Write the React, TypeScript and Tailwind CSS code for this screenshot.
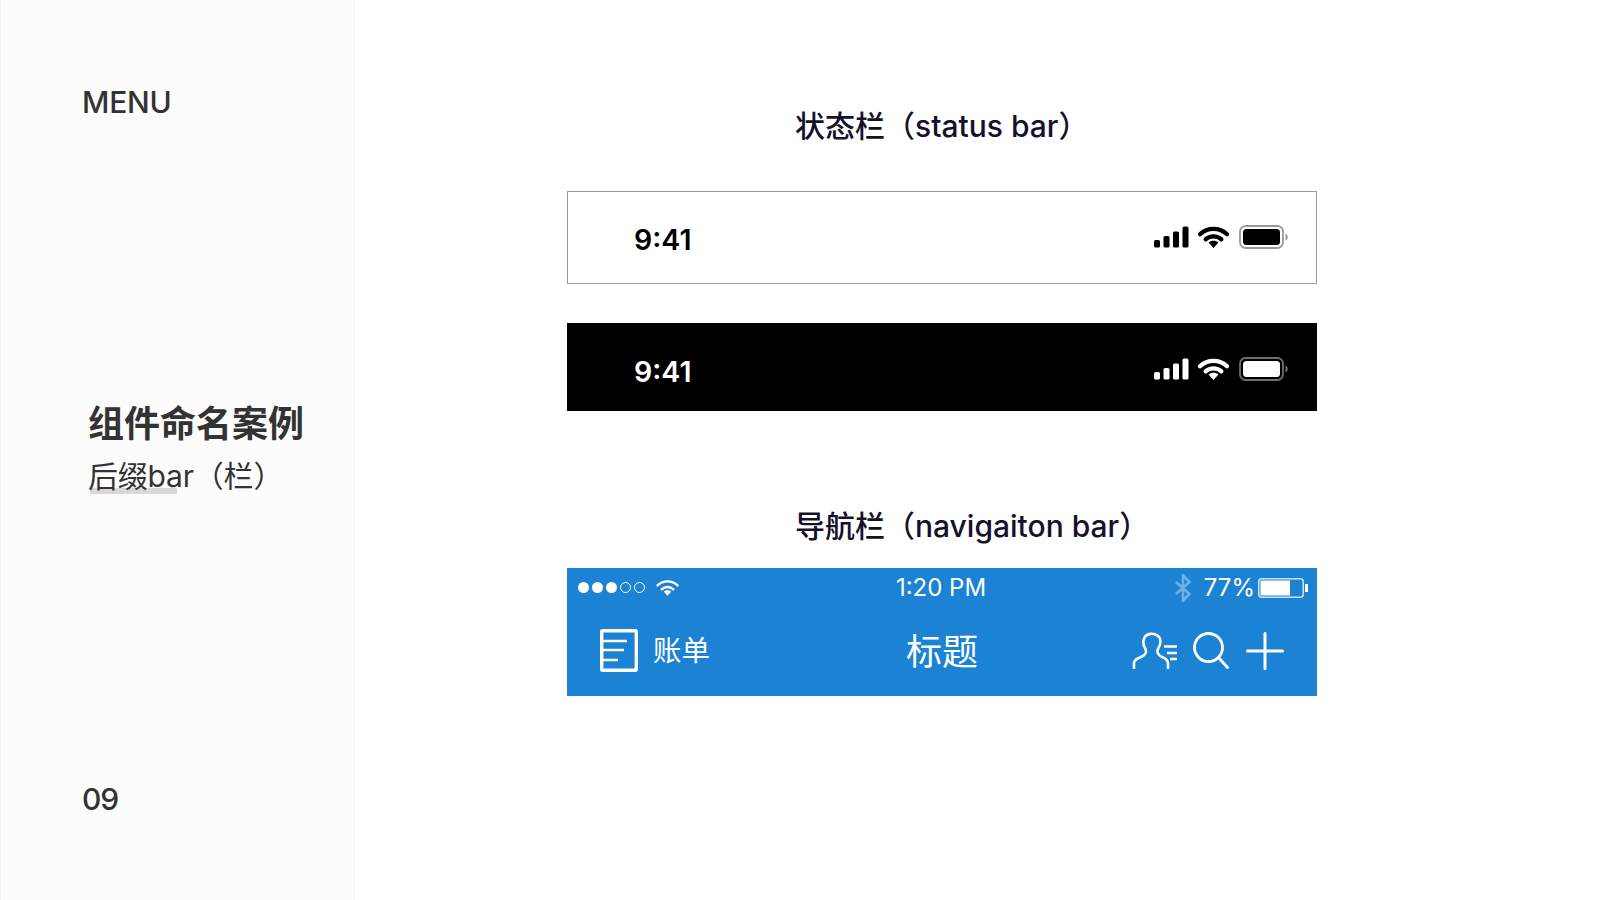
import React from "react";

const SANS = "font-['Inter','Noto_Sans_CJK_SC',sans-serif]";

function Signal({ c }: { c: string }) {
  return (
    <svg width="35" height="22" viewBox="0 0 35 22" className="block">
      <rect x="0" y="14" width="6" height="7.5" rx="1.6" fill={c} />
      <rect x="9.5" y="10" width="6" height="11.5" rx="1.6" fill={c} />
      <rect x="19" y="5.5" width="6" height="16" rx="1.6" fill={c} />
      <rect x="28.5" y="0.5" width="6" height="21" rx="1.6" fill={c} />
    </svg>
  );
}

function Wifi({ c, w = 31, h = 22, sw = 4.2 }: { c: string; w?: number; h?: number; sw?: number }) {
  return (
    <svg width={w} height={h} viewBox="0 0 31 22" className="block">
      <path d="M2 8.2 C9.5 1 21.5 1 29 8.2" fill="none" stroke={c} strokeWidth={sw} strokeLinecap="round" />
      <path d="M7.6 13.4 C12 9.4 19 9.4 23.4 13.4" fill="none" stroke={c} strokeWidth={sw} strokeLinecap="round" />
      <path d="M10.6 16.6 C13 14.2 18 14.2 20.4 16.6 L15.5 22 Z" fill={c} />
    </svg>
  );
}

function Battery({ fill, border }: { fill: string; border: string }) {
  return (
    <svg width="49" height="24" viewBox="0 0 49 24" className="block">
      <rect x="1" y="1" width="43" height="22" rx="5.5" fill="none" stroke={border} strokeWidth="1.8" />
      <rect x="4" y="4" width="37" height="16" rx="3.5" fill={fill} />
      <path d="M46.5 8.5 C48 9 48.8 10.5 48.8 12 C48.8 13.5 48 15 46.5 15.5 Z" fill={border} />
    </svg>
  );
}

function StatusRight({ c, border }: { c: string; border: string }) {
  return (
    <div className="flex items-center">
      <Signal c={c} />
      <div className="ml-[9px]">
        <Wifi c={c} />
      </div>
      <div className="ml-[10px]">
        <Battery fill={c} border={border} />
      </div>
    </div>
  );
}

function Heading({ cn, latin }: { cn: string; latin: string }) {
  return (
    <h2 className="pl-[228px] text-[30px] leading-[40px] font-medium text-[#15102b] whitespace-nowrap">
      {cn}（<span className="tracking-[0px]">{latin}</span>）
    </h2>
  );
}

export default function App() {
  return (
    <div className={`flex h-[900px] w-[1600px] overflow-hidden bg-white ${SANS}`}>
      <aside className="relative flex h-full w-[355px] shrink-0 flex-col border-x border-[#f3f3f3] bg-[#fcfcfc] pl-[81px] text-[#333333]">
        <div className="mt-[84px] text-[30px] leading-[36px] font-medium tracking-[-0.2px]">MENU</div>
        <div className="mt-[282px] pl-[6px] text-[36px] leading-[44px] font-semibold whitespace-nowrap">组件命名案例</div>
        <div className="relative mt-[8px] pl-[6px] text-[30px] leading-[44px] tracking-[-0.2px] whitespace-nowrap">
          <span className="absolute left-[8px] top-[34px] h-[6px] w-[87px] bg-[#d8d8d8]" />
          <span className="relative">后缀bar（栏）</span>
        </div>
        <div className="mt-[283px] text-[30px] leading-[36px] font-medium tracking-[-1px]">09</div>
      </aside>

      <main className="flex-1">
        <div className="pl-[212px] pt-[106px]">
          <div className="w-[750px]">
            <Heading cn="状态栏" latin="status bar" />
            <div className="mt-[45px] flex h-[93px] items-center justify-between border border-[#9b9b9b] bg-white pl-[66px] pr-[28px]">
              <span className="mt-[6px] text-[28.5px] font-semibold text-black">9:41</span>
              <div className="mb-[2px]">
                <StatusRight c="#000000" border="#9a9a9a" />
              </div>
            </div>
            <div className="mt-[39px] flex h-[88px] items-center justify-between bg-black pl-[67px] pr-[29px]">
              <span className="mt-[10px] text-[28.5px] font-semibold text-white">9:41</span>
              <div className="mt-[3px]">
                <StatusRight c="#ffffff" border="#6e6e6e" />
              </div>
            </div>
            <div className="mt-[95px]">
              <Heading cn="导航栏" latin="navigaiton bar" />
            </div>
            <div className="mt-[22px] h-[128px] bg-[#1c82d4] text-white">
              <div className="grid h-[40px] grid-cols-[1fr_auto_1fr] items-center pl-[11px] pr-[9px]">
                <div className="mb-[2px] flex items-center">
                  <div className="flex gap-[3px]">
                    <span className="h-[11px] w-[11px] rounded-full bg-white" />
                    <span className="h-[11px] w-[11px] rounded-full bg-white" />
                    <span className="h-[11px] w-[11px] rounded-full bg-white" />
                    <span className="h-[11px] w-[11px] rounded-full border border-white" />
                    <span className="h-[11px] w-[11px] rounded-full border border-white" />
                  </div>
                  <div className="ml-[11px]">
                    <Wifi c="#ffffff" w={23} h={19} sw={3.2} />
                  </div>
                </div>
                <span className="pr-[4px] text-[24px] leading-[30px] font-normal">1:20 PM</span>
                <div className="flex items-center justify-end">
                  <svg width="18" height="28" viewBox="0 0 18 28" className="block">
                    <path d="M2 8 L15.5 20 L9 26.5 V1.5 L15.5 8 L2 20" fill="none" stroke="#6fb0e5" strokeWidth="2.6" />
                  </svg>
                  <span className="ml-[12px] text-[24px] leading-[30px] font-normal">77%</span>
                  <svg width="50" height="20" viewBox="0 0 50 20" className="ml-[3px] block">
                    <rect x="0.75" y="0.75" width="44.5" height="18.5" rx="3" fill="none" stroke="#cfe4f6" strokeWidth="1.5" />
                    <rect x="2.5" y="2.5" width="29.5" height="15" fill="#ffffff" />
                    <rect x="47" y="6" width="3" height="8" fill="#ffffff" />
                  </svg>
                </div>
              </div>
              <div className="grid h-[88px] grid-cols-[1fr_auto_1fr] items-center pb-[4px] pl-[33px] pr-[33px]">
                <div className="flex items-center">
                  <svg width="38" height="43" viewBox="0 0 38 43" className="block">
                    <rect x="1.7" y="1.7" width="34.6" height="39.6" rx="1" fill="none" stroke="#ffffff" strokeWidth="3.4" />
                    <path d="M3 12 H27 M3 21 H24 M3 31 H18" stroke="#ffffff" strokeWidth="2.6" fill="none" />
                  </svg>
                  <span className="ml-[15px] mt-[2px] text-[28.5px] leading-[36px] font-normal">账单</span>
                </div>
                <span className="mt-[4px] text-[36px] leading-[44px] font-normal">标题</span>
                <div className="flex items-center justify-end">
                  <svg width="45" height="37" viewBox="0 0 45 37" className="block">
                    <path d="M2 36 V31 C2 27 6 26.5 10 24.5 C13 23 15 21.5 13.5 17 C11 13 10.5 9.5 12.5 5.5 C14.5 1.5 21.5 0.5 25.5 3.5 C29.5 6.5 29 12 26 17 C24.5 20 26 23 30 25 C34 26.5 36 28 36 31.5 V36" fill="none" stroke="#ffffff" strokeWidth="2.6" strokeLinecap="round" />
                    <path d="M32 14.5 H45 M35 21 H45 M38 27 H45" fill="none" stroke="#ffffff" strokeWidth="2.4" />
                  </svg>
                  <svg width="36" height="37" viewBox="0 0 36 37" className="ml-[16px] block">
                    <circle cx="15.5" cy="15.5" r="14" fill="none" stroke="#ffffff" strokeWidth="2.8" />
                    <path d="M25.5 25.5 L34.5 35.5" stroke="#ffffff" strokeWidth="2.8" strokeLinecap="round" />
                  </svg>
                  <svg width="38" height="38" viewBox="0 0 38 38" className="ml-[17px] mt-[2px] block">
                    <path d="M1.5 19 H36.5 M19 1.5 V36.5" stroke="#ffffff" strokeWidth="3" strokeLinecap="round" />
                  </svg>
                </div>
              </div>
            </div>
          </div>
        </div>
      </main>
    </div>
  );
}
